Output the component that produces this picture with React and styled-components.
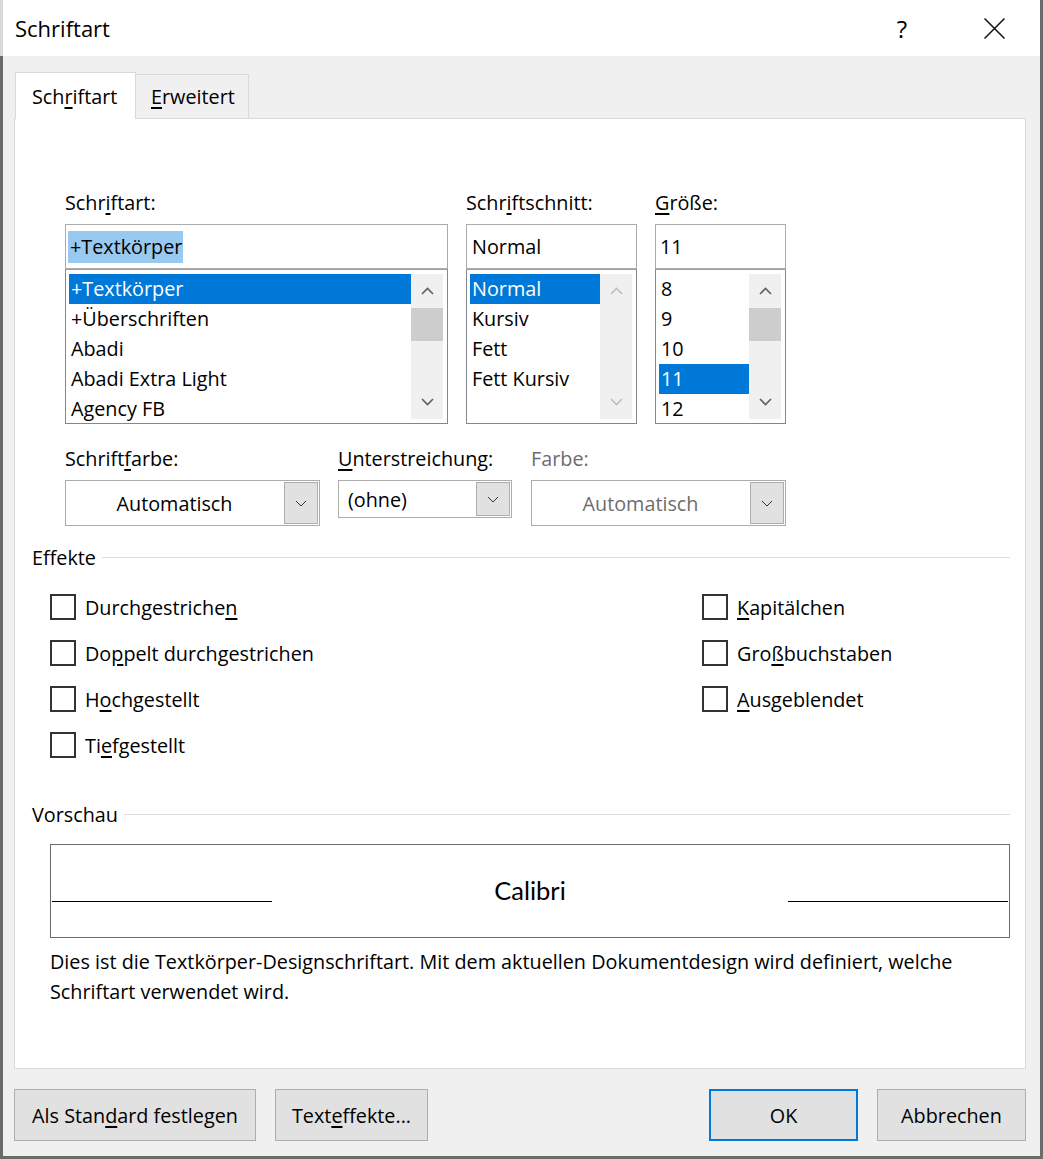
import React from 'react'
import styled, { createGlobalStyle } from 'styled-components'

const GlobalStyle = createGlobalStyle`
  html, body {
    margin: 0;
    padding: 0;
    background: #ffffff;
  }
  body {
    font-family: 'Open Sans', 'Noto Sans', sans-serif;
    color: #000;
  }
  * {
    box-sizing: border-box;
  }
`

const Window = styled.div`
  width: 1043px;
  height: 1159px;
  display: flex;
  flex-direction: column;
  font-size: 19.8px;
  border-right: 3px solid #6b6b6b;
`

const TitleBar = styled.div`
  height: 56px;
  flex: none;
  display: flex;
  align-items: center;
  background: #fff;
  border-left: 3px solid #dadada;

  .title {
    flex: 1;
    padding-left: 12px;
    font-size: 22px;
  }
`

const TitleButton = styled.div`
  width: 92px;
  height: 56px;
  display: flex;
  align-items: center;
  justify-content: center;
  font-size: 24px;
`

const Main = styled.div`
  flex: 1;
  display: flex;
  flex-direction: column;
  background: #f0f0f0;
  border-left: 3px solid #6b6b6b;
  border-bottom: 3px solid #6b6b6b;
  padding: 16px 14px 0 11px;
`

const Tabs = styled.div`
  display: flex;
  align-items: flex-end;
  padding-left: 1px;
`

const Tab = styled.div`
  height: ${(p) => (p.active ? '47px' : '44px')};
  width: ${(p) => p.width}px;
  margin-bottom: ${(p) => (p.active ? '-1px' : '0')};
  position: relative;
  z-index: ${(p) => (p.active ? 1 : 0)};
  background: ${(p) => (p.active ? '#fff' : '#f0f0f0')};
  border: 1px solid #d9d9d9;
  border-bottom: none;
  border-left: ${(p) => (p.active ? '1px solid #d9d9d9' : 'none')};
  display: flex;
  align-items: center;
  padding-left: ${(p) => (p.active ? 16 : 15)}px;
  padding-bottom: ${(p) => (p.active ? 0 : 1)}px;
  white-space: nowrap;
`

const Panel = styled.div`
  height: 951px;
  flex: none;
  width: 1012px;
  background: #fff;
  border: 1px solid #d9d9d9;
  padding-top: 72px;
`

const U = styled.span`
  text-decoration: underline;
  text-decoration-thickness: 2px;
  text-underline-offset: 3px;
`

const Label = styled.div`
  height: 24px;
  line-height: 24px;
  margin-bottom: 9px;
  white-space: nowrap;
  color: ${(p) => (p.disabled ? '#6d6d6d' : '#000')};
`

const FontGrid = styled.div`
  display: grid;
  grid-template-columns: 383px 171px 131px;
  column-gap: 18px;
  margin-left: 50px;
`

const Input = styled.div`
  height: 45px;
  border: 1px solid #ababab;
  display: flex;
  align-items: center;
  padding-left: ${(p) => p.pad || 5}px;

  .sel {
    background: #99c9ef;
    line-height: 32px;
    padding: 0 1px 0 2px;
  }
`

const List = styled.div`
  height: 155px;
  border: 1px solid #828790;
  border-top-color: #a0a0a0;
  display: flex;
  padding: 4px 4px 4px 3px;
`

const Items = styled.div`
  flex: 1;
`

const Item = styled.div`
  height: 30px;
  line-height: 30px;
  padding-left: 2px;
  white-space: nowrap;
  background: ${(p) => (p.selected ? '#0078d7' : 'transparent')};
  color: ${(p) => (p.selected ? '#fff' : '#000')};
`

const Scrollbar = styled.div`
  width: 32px;
  background: #f0f0f0;
  display: flex;
  flex-direction: column;
`

const ScrollArrow = styled.div`
  height: 34px;
  display: flex;
  align-items: center;
  justify-content: center;
`

const Thumb = styled.div`
  height: 33px;
  background: #cdcdcd;
`

const Spacer = styled.div`
  flex: 1;
`

const DropRow = styled.div`
  display: flex;
  margin: 23px 0 0 50px;
`

const DropField = styled.div`
  width: ${(p) => p.width}px;
  margin-right: ${(p) => p.gap || 0}px;
`

const Dropdown = styled.div`
  height: ${(p) => p.height || 46}px;
  border: 1px solid #acacac;
  background: #fff;
  display: flex;
  align-items: stretch;

  .value {
    flex: 1;
    display: flex;
    align-items: center;
    justify-content: ${(p) => (p.centered ? 'center' : 'flex-start')};
    padding-left: ${(p) => (p.centered ? 0 : 9)}px;
    color: ${(p) => (p.disabled ? '#6d6d6d' : '#000')};
  }
`

const DropButton = styled.div`
  width: 34px;
  margin: 1px;
  background: #e1e1e1;
  border: 1px solid #adadad;
  display: flex;
  align-items: center;
  justify-content: center;
`

const GroupHeader = styled.div`
  display: flex;
  align-items: center;
  height: 24px;
  line-height: 24px;
  padding: 0 15px 0 17px;
  margin-top: ${(p) => p.top}px;

  .line {
    flex: 1;
    height: 1px;
    background: #dcdcdc;
    margin-left: 6px;
    margin-top: -2px;
  }
`

const Effects = styled.div`
  display: grid;
  grid-template-columns: 652px 1fr;
  padding-left: 35px;
  margin-top: 14px;
`

const EffectColumn = styled.div`
  display: flex;
  flex-direction: column;
`

const CheckRow = styled.div`
  height: 46px;
  display: flex;
  align-items: center;
  gap: 9px;
  white-space: nowrap;
`

const CheckBox = styled.div`
  width: 26px;
  height: 26px;
  border: 2px solid #333;
  background: #fff;
`

const Preview = styled.div`
  height: 94px;
  margin: 17px 15px 0 35px;
  border: 1px solid #6a6a6a;
  display: flex;
  align-items: center;
  padding: 0 1px;

  .sample {
    flex: 1;
    text-align: center;
    font-family: Lato, 'Open Sans', sans-serif;
    font-size: 25.5px;
    margin-top: -2px;
  }
`

const PreviewLine = styled.div`
  width: 220px;
  height: 1px;
  background: #000;
  margin-top: 20px;
`

const Description = styled.div`
  margin-top: 9px;
  padding-left: 35px;
  line-height: 30px;
  white-space: nowrap;
`

const Footer = styled.div`
  display: flex;
  justify-content: space-between;
  padding-top: 20px;
`

const ButtonGroup = styled.div`
  display: flex;
  gap: 19px;
`

const Button = styled.div`
  width: ${(p) => p.width}px;
  height: 52px;
  background: #e1e1e1;
  border: ${(p) => (p.primary ? '2px solid #0078d7' : '1px solid #adadad')};
  display: flex;
  align-items: center;
  justify-content: center;
  white-space: nowrap;
`

function Chevron({ up, color = '#606060' }) {
  return (
    <svg width="13" height="8" viewBox="0 0 13 8">
      <path
        d={up ? 'M1 7 L6.5 1.5 L12 7' : 'M1 1 L6.5 6.5 L12 1'}
        fill="none"
        stroke={color}
        strokeWidth="1.6"
      />
    </svg>
  )
}

function SmallChevron() {
  return (
    <svg width="12" height="7" viewBox="0 0 12 7">
      <path d="M1 1 L6 6 L11 1" fill="none" stroke="#333" strokeWidth="1" />
    </svg>
  )
}

function ScrollBar({ disabled, thumb }) {
  const color = disabled ? '#c0c0c0' : '#606060'
  return (
    <Scrollbar>
      <ScrollArrow>
        <Chevron up color={color} />
      </ScrollArrow>
      {thumb && <Thumb />}
      <Spacer />
      <ScrollArrow>
        <Chevron color={color} />
      </ScrollArrow>
    </Scrollbar>
  )
}

function FontList({ items, selected, disabled, thumb }) {
  return (
    <List>
      <Items>
        {items.map((item) => (
          <Item key={item} selected={item === selected}>
            {item}
          </Item>
        ))}
      </Items>
      <ScrollBar disabled={disabled} thumb={thumb} />
    </List>
  )
}

function Check({ children }) {
  return (
    <CheckRow>
      <CheckBox />
      <span>{children}</span>
    </CheckRow>
  )
}

export default function App() {
  return (
    <Window>
      <GlobalStyle />
      <TitleBar>
        <div className="title">Schriftart</div>
        <TitleButton>?</TitleButton>
        <TitleButton>
          <svg width="21" height="21" viewBox="0 0 21 21">
            <path d="M0.5 0.5 L20.5 20.5 M20.5 0.5 L0.5 20.5" stroke="#111" strokeWidth="1.5" />
          </svg>
        </TitleButton>
      </TitleBar>
      <Main>
        <Tabs>
          <Tab active width={121}>
            Sch<U>r</U>iftart
          </Tab>
          <Tab width={113}>
            <U>E</U>rweitert
          </Tab>
        </Tabs>
        <Panel>
          <FontGrid>
            <div>
              <Label>
                Schr<U>i</U>ftart:
              </Label>
              <Input pad={2}>
                <span className="sel">+Textkörper</span>
              </Input>
              <FontList
                items={['+Textkörper', '+Überschriften', 'Abadi', 'Abadi Extra Light', 'Agency FB']}
                selected="+Textkörper"
                thumb
              />
            </div>
            <div>
              <Label>
                Schr<U>i</U>ftschnitt:
              </Label>
              <Input pad={5}>Normal</Input>
              <FontList
                items={['Normal', 'Kursiv', 'Fett', 'Fett Kursiv']}
                selected="Normal"
                disabled
              />
            </div>
            <div>
              <Label>
                <U>G</U>röße:
              </Label>
              <Input pad={4}>11</Input>
              <FontList items={['8', '9', '10', '11', '12']} selected="11" thumb />
            </div>
          </FontGrid>

          <DropRow>
            <DropField width={255} gap={18}>
              <Label>
                Schrift<U>f</U>arbe:
              </Label>
              <Dropdown centered>
                <div className="value">Automatisch</div>
                <DropButton>
                  <SmallChevron />
                </DropButton>
              </Dropdown>
            </DropField>
            <DropField width={174} gap={19}>
              <Label>
                <U>U</U>nterstreichung:
              </Label>
              <Dropdown height={38}>
                <div className="value">(ohne)</div>
                <DropButton>
                  <SmallChevron />
                </DropButton>
              </Dropdown>
            </DropField>
            <DropField width={255}>
              <Label disabled>Farbe:</Label>
              <Dropdown centered disabled>
                <div className="value">Automatisch</div>
                <DropButton>
                  <SmallChevron />
                </DropButton>
              </Dropdown>
            </DropField>
          </DropRow>

          <GroupHeader top={20}>
            Effekte
            <div className="line" />
          </GroupHeader>
          <Effects>
            <EffectColumn>
              <Check>
                Durchgestriche<U>n</U>
              </Check>
              <Check>
                Do<U>p</U>pelt durchgestrichen
              </Check>
              <Check>
                H<U>o</U>chgestellt
              </Check>
              <Check>
                Ti<U>e</U>fgestellt
              </Check>
            </EffectColumn>
            <EffectColumn>
              <Check>
                <U>K</U>apitälchen
              </Check>
              <Check>
                Gro<U>ß</U>buchstaben
              </Check>
              <Check>
                <U>A</U>usgeblendet
              </Check>
            </EffectColumn>
          </Effects>

          <GroupHeader top={35}>
            Vorschau
            <div className="line" />
          </GroupHeader>
          <Preview>
            <PreviewLine />
            <div className="sample">Calibri</div>
            <PreviewLine />
          </Preview>
          <Description>
            Dies ist die Textkörper-Designschriftart. Mit dem aktuellen Dokumentdesign wird definiert, welche
            <br />
            Schriftart verwendet wird.
          </Description>
        </Panel>
        <Footer>
          <ButtonGroup>
            <Button width={242}>
              Als Stan<U>d</U>ard festlegen
            </Button>
            <Button width={153}>
              Text<U>e</U>ffekte...
            </Button>
          </ButtonGroup>
          <ButtonGroup>
            <Button width={149} primary>
              OK
            </Button>
            <Button width={149}>Abbrechen</Button>
          </ButtonGroup>
        </Footer>
      </Main>
    </Window>
  )
}
